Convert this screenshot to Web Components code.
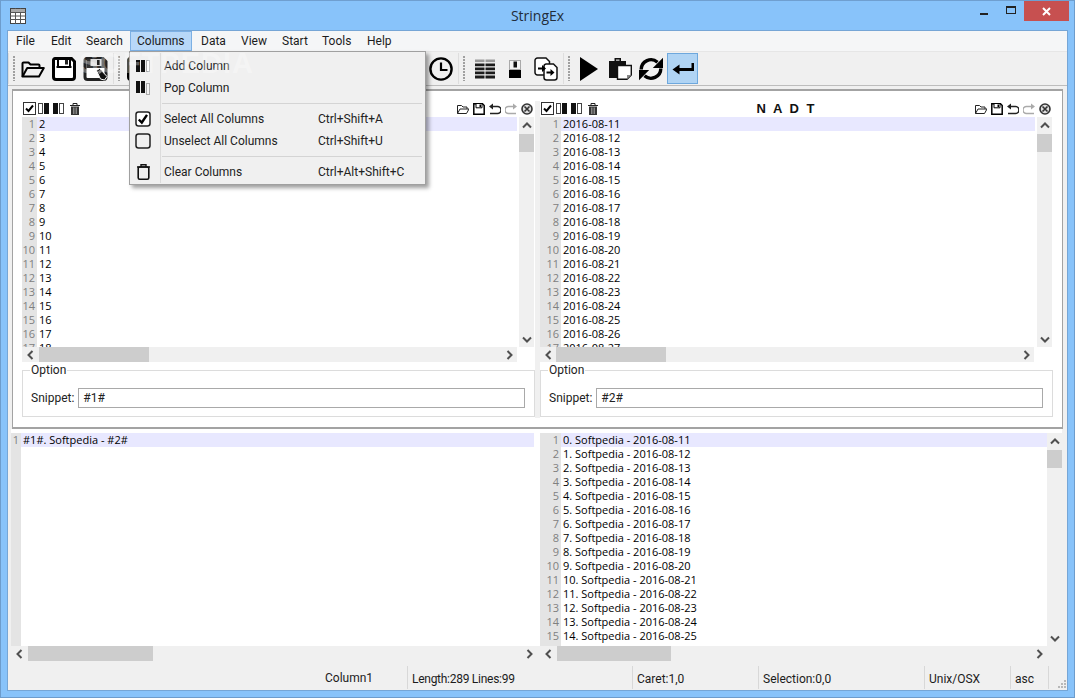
<!DOCTYPE html>
<html>
<head>
<meta charset="utf-8">
<title>StringEx</title>
<style>
  html, body { margin: 0; padding: 0; background: #88c3fa; }
  body { font-family: Roboto, "Liberation Sans", sans-serif; font-size: 12px; color: #000; }
</style>
</head>
<body>
<app-window>
  <menu-bar></menu-bar>
  <tool-bar>
    <tool-grip></tool-grip>
    <x-icon name="open" w="24" h="24" style="margin-left:5px"></x-icon>
    <x-icon name="save" w="24" h="24" style="margin-left:7px"></x-icon>
    <x-icon name="saveas" w="25" h="24" style="margin-left:7px"></x-icon>
    <tool-grip style="margin-left:5px"></tool-grip>
    <x-icon name="save" w="24" h="24" style="margin-left:6px"></x-icon>
    <x-icon name="clock" w="24" h="24" style="margin-left:278px"></x-icon>
    <tool-grip style="margin-left:5px"></tool-grip>
    <x-icon name="table" w="20" h="20" style="margin-left:9px"></x-icon>
    <x-icon name="disk" w="12" h="18" style="margin-left:14px"></x-icon>
    <x-icon name="swap" w="24" h="24" style="margin-left:13px"></x-icon>
    <tool-grip style="margin-left:5px"></tool-grip>
    <x-icon name="play" w="18" h="24" style="margin-left:9px"></x-icon>
    <x-icon name="paste" w="23" h="23" style="margin-left:11px"></x-icon>
    <x-icon name="refresh" w="24" h="24" style="margin-left:7px"></x-icon>
    <tool-toggle style="margin-left:4px"><x-icon name="enter" w="22" h="12"></x-icon></tool-toggle>
  </tool-bar>
  <split-top>
    <div slot="a">
      <code-pane id="p1" gutter="15" view="230" track="495" thumb-at="0" thumb="110" vthumb="18" vgap="2,1" actions></code-pane>
      <option-box value="#1#"></option-box>
    </div>
    <div slot="b">
      <code-pane id="p2" gutter="21" view="230" track="494" thumb-at="-1" thumb="110" vthumb="18" vgap="2,1" heading="N A D T" actions></code-pane>
      <option-box value="#2#"></option-box>
    </div>
  </split-top>
  <split-bottom>
    <code-pane slot="a" id="p3" gutter="10" view="213" track="526" thumb-at="0" thumb="125" novscroll></code-pane>
    <code-pane slot="b" id="p4" gutter="21" view="213" track="507" thumb-at="0" thumb="114" vthumb="18" vgap="0,0"></code-pane>
  </split-bottom>
  <status-bar></status-bar>
</app-window>

<script>
const ICONS = {
  open: `<g fill="none" stroke="#000" stroke-width="2" stroke-linejoin="round"><path d="M1.500 19.500V6.500a1 1 0 0 1 1-1h5l2 2h8a1 1 0 0 1 1 1V11"/><path d="M1.500 19.500H18L22.800 11H6.200Z"/></g>`,
  save: `<path d="M3 1.500H19.500L22.500 4.500V20a2.500 2.500 0 0 1-2.500 2.500H4A2.500 2.500 0 0 1 1.500 20V3A1.500 1.500 0 0 1 3 1.500Z" fill="#fff" stroke="#000" stroke-width="3"/><path d="M4.500 9H19.500V11H4.500Z" fill="#000"/><path d="M6 3V9" stroke="#000" stroke-width="2"/><path d="M18 3V9" stroke="#000" stroke-width="2"/><rect x="13" y="3" width="3" height="4.500" fill="#222"/>`,
  saveas: `<path d="M3 1.500H19.500L22.500 4.500V20a2.500 2.500 0 0 1-2.500 2.500H4A2.500 2.500 0 0 1 1.500 20V3A1.500 1.500 0 0 1 3 1.500Z" fill="#fff" stroke="#222" stroke-width="3"/><path d="M3 2H22V11H3Z" fill="#333"/><rect x="7" y="2" width="11" height="7" fill="#ddd"/><rect x="13.500" y="3" width="2.600" height="5" fill="#222"/><path d="M13 13.500L16 11.500L23.500 19.500L21 23L17 22Z" fill="#111" stroke="#fff" stroke-width="1"/><path d="M14 14.500L17 12.500L19 14.500L16 17Z" fill="#888"/>`,
  clock: `<circle cx="12" cy="12" r="10.600" fill="none" stroke="#000" stroke-width="2.400"/><path d="M12 5.500V13H18.500" fill="none" stroke="#000" stroke-width="2.200"/>`,
  table: `<rect width="9.500" height="2.600" fill="#9a9a9a"/><rect x="10.500" width="9.500" height="2.600" fill="#9a9a9a"/><path d="M0 4h9.500v2.800H0ZM10.500 4H20v2.800h-9.500ZM0 8h9.500v2.800H0ZM10.500 8H20v2.800h-9.500ZM0 12h9.500v2.800H0ZM10.500 12H20v2.800h-9.500ZM0 16h9.500v3H0ZM10.500 16H20v3h-9.500Z" fill="#1b1b1b"/>`,
  disk: `<rect x=".5" y=".5" width="11" height="9" fill="#f4f4f4" stroke="#aaa"/><rect x="4.500" y="1.500" width="3.500" height="6" fill="#111"/><rect y="10" width="12" height="8" fill="#000"/>`,
  swap: `<path d="M3.500 1H12L15.500 4.500V18H3.500a2.500 2.500 0 0 1-2.500-2.500V3.500A2.500 2.500 0 0 1 3.500 1Z" fill="#fff" stroke="#111" stroke-width="1.500"/><path d="M12 7H19.500L23 10.500V20.500a2.500 2.500 0 0 1-2.500 2.500H12.500a2.500 2.500 0 0 1-2.500-2.500V9.500A2.500 2.500 0 0 1 12 7Z" fill="#fff" stroke="#111" stroke-width="1.500"/><path d="M4 10.500H8V8L12 11.500L8 15V12.500H4Z" fill="#000"/><path d="M12.500 14.500H16.500V12L20.500 15.500L16.500 19V16.500H12.500Z" fill="#000"/>`,
  play: `<path d="M0 0L18 12L0 24Z" fill="#000"/>`,
  paste: `<path d="M0 4H5.500V1H12V4H17V21H0Z" fill="#111"/><rect x="7" y="2.500" width="3.500" height="1.300" fill="#ccc"/><path d="M8.500 8.500H22.300V18L18 22.300H8.500Z" fill="#fff" stroke="#111" stroke-width="1.400"/><path d="M22.300 18H18V22.300Z" fill="#888"/>`,
  refresh: `<g fill="none" stroke="#000" stroke-width="3.400"><path d="M2.200 12.500A9.800 9.800 0 0 1 18.500 5.200"/><path d="M21.800 11.500A9.800 9.800 0 0 1 5.500 18.800"/></g><path d="M24 .8V11H13.800Z M0 23.200V13H10.200Z" fill="#000"/>`,
  enter: `<path d="M20.500 0V6.500H5" fill="none" stroke="#000" stroke-width="3"/><path d="M0 6.500L7 1.500V11.500Z" fill="#000"/>`,
  coladd: `<rect x="0" y="0" width="4" height="12" fill="#111"/><rect x="5" y="0" width="4" height="12" fill="#111"/><rect x="10.500" y=".5" width="3" height="11" fill="#fff" stroke="#aaa"/>`,
  colpop: `<rect x="0" y="0" width="4" height="12" fill="#111"/><rect x="5" y="0" width="4" height="12" fill="#111"/><rect x="10.500" y="2.500" width="3" height="11" fill="#f4f4f4" stroke="#aaa"/>`,
  boxon: `<rect x="1" y="1" width="14" height="14" rx="2.500" fill="#fff" stroke="#222" stroke-width="1.500"/><path d="M3.800 8.500L6.800 11.500L12 3.800" fill="none" stroke="#000" stroke-width="2.400"/>`,
  boxoff: `<rect x="1" y="1" width="14" height="14" rx="2.500" fill="none" stroke="#222" stroke-width="1.500"/>`,
  trashbig: `<path d="M0 3H13M4 3V.8H9V3" fill="none" stroke="#111" stroke-width="1.400"/><rect x="1.200" y="3" width="10.600" height="12.200" rx="1.500" fill="none" stroke="#111" stroke-width="1.600"/>`,
  small_check: `<rect x=".5" y=".5" width="12" height="12" fill="#fff" stroke="#333"/><path d="M3 6.500L5.500 9L10 3.500" fill="none" stroke="#000" stroke-width="2"/>`,
  small_cola: `<rect x=".5" y=".5" width="4" height="10" fill="#fff" stroke="#444"/><rect x="6" y="0" width="5" height="11" fill="#111"/>`,
  small_colb: `<rect x="0" y="0" width="5" height="11" fill="#111"/><rect x="6.500" y=".5" width="4" height="10" fill="#fff" stroke="#444"/>`,
  small_trash: `<path d="M0 2.500H10M3 2V.5H7V2" fill="none" stroke="#222"/><path d="M1 3.500H9V12H1Z" fill="#333"/><path d="M3.500 4.500V11M5 4.500V11M6.500 4.500V11" stroke="#aaa" stroke-width=".7"/>`,
  small_open: `<g fill="none" stroke="#222"><path d="M.5 10.500V2.500H4.500L6 4H10V6"/><path d="M.5 10.500H9.500L12 6H3Z"/></g>`,
  small_save: `<path d="M.8.8H9.500L11.200 2.500V11.200H.8Z" fill="#fff" stroke="#000" stroke-width="1.500"/><path d="M3 1V4.800H9V1" fill="#fff" stroke="#000"/><rect x="6.500" y="1.500" width="1.500" height="2.500" fill="#000"/>`,
  small_undo: `<path d="M3 3.500H8.500a3 3 0 0 1 0 7H1" fill="none" stroke="#222" stroke-width="1.500"/><path d="M0 3.500L4 .5V6.500Z" fill="#222"/>`,
  small_redo: `<path d="M9 3.500H3.500a3 3 0 0 0 0 7H11" fill="none" stroke="#aaa" stroke-width="1.500"/><path d="M12 3.500L8 .5V6.500Z" fill="#aaa"/>`,
  small_close: `<circle cx="6" cy="6" r="5" fill="#ddd" stroke="#333" stroke-width="1.600"/><path d="M3.500 3.500L8.500 8.500M8.500 3.500L3.500 8.500" stroke="#333" stroke-width="1.600"/>`,
  appicon: `<rect x=".5" y=".5" width="15" height="15" fill="#fff" stroke="#444"/><path d="M0 4.500H16M0 8H16M0 11.500H16M5.500 0V16M10.500 0V16" stroke="#555"/><rect x="1" y="1" width="14" height="3" fill="#aaa"/>`
};
const VIEW = { small_check:[13,13], small_cola:[11,11], small_colb:[11,11], small_trash:[10,12], small_open:[12,11], small_save:[12,12], small_undo:[12,12], small_redo:[12,12], small_close:[12,12], coladd:[14,12], colpop:[14,14], boxon:[16,16], boxoff:[16,16], trashbig:[13,16], appicon:[16,16], table:[20,19], disk:[12,18], play:[18,24], paste:[23,23], enter:[21,12], saveas:[24,24] };

class XIcon extends HTMLElement {
  connectedCallback() {
    const name = this.getAttribute('name');
    const w = this.getAttribute('w') || 16;
    const h = this.getAttribute('h') || 16;
    const v = VIEW[name] || [24, 24];
    this.attachShadow({ mode: 'open' }).innerHTML = `
      <style>:host { display: block; flex: none; line-height: 0; }</style>
      <svg width="${w}" height="${h}" viewBox="0 0 ${v[0]} ${v[1]}">${ICONS[name]}</svg>`;
  }
}

class AppWindow extends HTMLElement {
  constructor() {
    super();
    this.attachShadow({ mode: 'open' }).innerHTML = `
      <style>
        :host {
          display: flex; flex-direction: column; position: relative; box-sizing: border-box;
          width: 1075px; height: 698px; background: #88c3fa;
          border: 1px solid #6d9ccc; border-top-color: #6f9fd0; padding: 0 6px 6px;
          overflow: hidden;
        }
        .title { height: 29px; display: flex; align-items: flex-start; position: relative; flex: none; }
        .app { margin: 7px 0 0 3px; }
        .name { flex: 1; text-align: center; font: 14px/30px "Open Sans", sans-serif; color: #222d3a; padding-left: 77px; }
        .btns { display: flex; align-items: stretch; height: 20px; margin-right: -1px; }
        .b { width: 26px; display: flex; align-items: center; justify-content: center; }
        .close { width: 45px; background: #c75050; }
        .client {
          flex: 1; min-height: 0; display: flex; flex-direction: column;
          border: 1px solid #76a6d6; background: #f0f0f0;
        }
        .mark {
          position: absolute; left: 78px; top: 46px; font: bold 29px "Liberation Sans", sans-serif;
          letter-spacing: 1px; color: rgba(255,255,255,.32); pointer-events: none; z-index: 30;
        }
      </style>
      <div class="title">
        <x-icon class="app" name="appicon" w="16" h="16"></x-icon>
        <div class="name">StringEx</div>
        <div class="btns">
          <div class="b"><svg width="10" height="10"><rect y="7" width="8" height="2" fill="#222"/></svg></div>
          <div class="b"><svg width="11" height="10"><rect x=".5" y=".5" width="9" height="7" fill="none" stroke="#222"/><rect width="10" height="2" fill="#222"/></svg></div>
          <div class="b close"><svg width="9" height="9"><path d="M1 1L8 8M8 1L1 8" stroke="#fff" stroke-width="2"/></svg></div>
        </div>
      </div>
      <div class="client"><slot></slot></div>
      <div class="mark">SOFTPEDIA</div>`;
  }
}

class MenuRow extends HTMLElement {
  connectedCallback() {
    const icon = this.getAttribute('icon');
    const [w, h] = (this.getAttribute('size') || '16,16').split(',');
    this.attachShadow({ mode: 'open' }).innerHTML = `
      <style>
        :host { display: flex; align-items: center; height: 22px; }
        .ic { width: 30px; display: flex; justify-content: center; box-sizing: border-box; padding-right: 6px; }
        .tx { width: 154px; margin-left: 3px; color: #222; }
        .sc { color: #222; }
      </style>
      <div class="ic"><x-icon name="${icon}" w="${w}" h="${h}"></x-icon></div>
      <div class="tx">${this.getAttribute('label')}</div>
      <div class="sc">${this.getAttribute('keys') || ''}</div>`;
  }
}

class DropMenu extends HTMLElement {
  constructor() {
    super();
    this.attachShadow({ mode: 'open' }).innerHTML = `
      <style>
        :host {
          position: absolute; left: 121px; top: 20px; z-index: 20; box-sizing: border-box;
          width: 297px; height: 134px; padding: 3px 0 0 1px; display: block;
          background: #f0f0f0;
          border: 1px solid #a0a0a0; box-shadow: 3px 3px 4px rgba(0,0,0,.38);
        }
        .rule { position: absolute; left: 30px; top: 1px; bottom: 1px; width: 1px; background: #dcdcdc; }
        hr { border: 0; height: 1px; background: #d4d4d4; margin: 4px 3px 4px 31px; }
      </style>
      <div class="rule"></div>
      <menu-row icon="coladd" size="14,12" label="Add Column"></menu-row>
      <menu-row icon="colpop" size="14,14" label="Pop Column"></menu-row>
      <hr>
      <menu-row icon="boxon" label="Select All Columns" keys="Ctrl+Shift+A"></menu-row>
      <menu-row icon="boxoff" label="Unselect All Columns" keys="Ctrl+Shift+U"></menu-row>
      <hr>
      <menu-row icon="trashbig" size="13,16" label="Clear Columns" keys="Ctrl+Alt+Shift+C"></menu-row>`;
  }
}

class MenuBar extends HTMLElement {
  constructor() {
    super();
    const names = [['File', 35], ['Edit', 35], ['Search', 51], ['Columns', 64, 1], ['Data', 40], ['View', 41], ['Start', 40], ['Tools', 45], ['Help', 45]];
    this.attachShadow({ mode: 'open' }).innerHTML = `
      <style>
        :host {
          display: flex; position: relative; height: 20px; flex: none;
          background: #f5f6f7; border-bottom: 1px solid #e6e6e6; color: #1c1c1c;
        }
        .m { flex: none; padding-left: 8px; line-height: 21px; height: 20px; box-sizing: border-box; white-space: nowrap; }
        .on { background: #b8d8f8; border: 1px solid #7cb0e4; padding-left: 6px; line-height: 19px; background-clip: padding-box; margin: 0 1px; }
      </style>
      ${names.map(n => `<div class="m ${n[2] ? 'on' : ''}" style="width:${n[2] ? n[1] - 2 : n[1]}px">${n[0]}</div>`).join('')}
      <drop-menu></drop-menu>`;
  }
}

class ToolGrip extends HTMLElement {
  constructor() {
    super();
    this.attachShadow({ mode: 'open' }).innerHTML = `
      <style>
        :host {
          display: flex; flex: none; width: 8px; height: 31px; box-sizing: border-box; align-items: center;
          border-left: 1px solid #dedede; padding-left: 4px;
        }
        div {
          width: 3px; height: 25px;
          background: radial-gradient(circle at 1px 1px, #a0a0a0 1px, transparent 1px) 0 0 / 3px 3px;
        }
      </style>
      <div></div>`;
  }
}

class ToolToggle extends HTMLElement {
  constructor() {
    super();
    this.attachShadow({ mode: 'open' }).innerHTML = `
      <style>
        :host {
          display: flex; align-items: center; justify-content: center; flex: none; box-sizing: border-box;
          width: 31px; height: 31px; background: #b0d4f4; border: 1px solid #6ea8dd;
        }
      </style>
      <slot></slot>`;
  }
}

class ToolBar extends HTMLElement {
  constructor() {
    super();
    this.attachShadow({ mode: 'open' }).innerHTML = `
      <style>
        :host {
          display: flex; align-items: center; height: 33px; flex: none;
          background: #f0f0f0; border-bottom: 1px solid #bdbdbd;
        }
      </style>
      <slot></slot>`;
  }
}

class ScrollBar extends HTMLElement {
  connectedCallback() {
    const vert = this.hasAttribute('vertical');
    const at = this.getAttribute('at') || 0;
    const len = this.getAttribute('len') || 100;
    const back = vert ? 'M1 6.500L5 2.500L9 6.500' : 'M6.500 1L2.500 5L6.500 9';
    const fwd = vert ? 'M1 3.500L5 7.500L9 3.500' : 'M3.500 1L7.500 5L3.500 9';
    const thumbSize = vert ? `height:${len}px;margin-top:${at}px` : `width:${len}px;margin-left:${at}px`;
    this.attachShadow({ mode: 'open' }).innerHTML = `
      <style>
        :host { display: flex; flex: none; background: #f0f0f0; flex-direction: ${vert ? 'column' : 'row'}; ${vert ? 'width:15px' : 'height:15px'}; }
        .a { flex: none; display: flex; align-items: center; justify-content: center; ${vert ? 'height:17px' : 'width:17px'}; }
        .t { flex: none; background: #cdcdcd; }
        .s { flex: 1; }
      </style>
      <div class="a"><svg width="10" height="10"><path d="${back}" fill="none" stroke="#505050" stroke-width="2"/></svg></div>
      <div class="t" style="${thumbSize}"></div>
      <div class="s"></div>
      <div class="a"><svg width="10" height="10"><path d="${fwd}" fill="none" stroke="#505050" stroke-width="2"/></svg></div>`;
  }
}

class CodePane extends HTMLElement {
  connectedCallback() {
    const lines = (this.getAttribute('lines') || '').split('|');
    const gutter = +this.getAttribute('gutter');
    const view = +this.getAttribute('view');
    const track = +this.getAttribute('track');
    const thumb = +this.getAttribute('thumb');
    const thumbAt = this.getAttribute('thumb-at') || 0;
    const heading = this.getAttribute('heading') || '';
    const actions = this.hasAttribute('actions');
    const noV = this.hasAttribute('novscroll');
    const [gapL, gapR] = (this.getAttribute('vgap') || '0,0').split(',');
    const numRows = lines.map((_, i) => `<div>${i + 1}</div>`).join('');
    const textRows = lines.map((t, i) => `<div class="${i === 0 ? 'cur' : ''}">${t}</div>`).join('');
    this.attachShadow({ mode: 'open' }).innerHTML = `
      <style>
        :host { display: block; }
        .head { display: flex; align-items: center; height: 16px; box-sizing: border-box; padding-bottom: 1px; background: #fff; }
        .group { display: flex; align-items: center; }
        .ttl { flex: 1; text-align: center; font: bold 13px "Liberation Sans", sans-serif; letter-spacing: 2px; white-space: pre; color: #111; }
        .body { display: flex; height: ${view}px; background: #fff; }
        .view { flex: 1; display: flex; overflow: hidden; font: 11px/14px "Open Sans", "Liberation Sans", sans-serif; color: #000; }
        .gut { flex: none; width: ${gutter}px; background: #e4e4e4; color: #808080; text-align: right; box-sizing: border-box; padding-right: 2px; }
        .txt { flex: 1; min-width: 0; }
        .txt div { padding-left: 2px; height: 14px; white-space: nowrap; }
        .cur { background: #e8e8ff; }
        scroll-bar[vertical] { margin: 0 ${gapR}px 0 ${gapL}px; }
      </style>
      ${actions ? `<div class="head">
        <div class="group" style="padding-left:1px">
          <x-icon name="small_check" w="13" h="13"></x-icon>
          <x-icon name="small_cola" w="11" h="11" style="margin-left:2px"></x-icon>
          <x-icon name="small_colb" w="11" h="11" style="margin-left:4px"></x-icon>
          <x-icon name="small_trash" w="10" h="12" style="margin-left:6px"></x-icon>
        </div>
        <div class="ttl">${heading}</div>
        <div class="group" style="padding-right:2px">
          <x-icon name="small_open" w="12" h="11"></x-icon>
          <x-icon name="small_save" w="12" h="12" style="margin-left:4px"></x-icon>
          <x-icon name="small_undo" w="12" h="12" style="margin-left:4px"></x-icon>
          <x-icon name="small_redo" w="12" h="12" style="margin-left:4px"></x-icon>
          <x-icon name="small_close" w="12" h="12" style="margin-left:4px"></x-icon>
        </div>
      </div>` : ''}
      <div class="body">
        <div class="view">
          <div class="gut">${numRows}</div>
          <div class="txt">${textRows}</div>
        </div>
        ${noV ? '' : `<scroll-bar vertical at="0" len="${this.getAttribute('vthumb')}"></scroll-bar>`}
      </div>
      <scroll-bar at="${thumbAt}" len="${thumb}" style="width:${track}px"></scroll-bar>`;
  }
}

class OptionBox extends HTMLElement {
  connectedCallback() {
    this.attachShadow({ mode: 'open' }).innerHTML = `
      <style>
        :host { display: block; height: 55px; box-sizing: border-box; background: #fff; color: #222; }
        fieldset {
          margin: 0; height: 55px; box-sizing: border-box; border: 1px solid #dcdcdc; padding: 0 9px 0 8px;
          display: flex; align-items: center;
        }
        legend { padding: 0 1px; margin-left: -1px; line-height: 16px; }
        .row { display: flex; align-items: center; gap: 4px; width: 100%; margin-top: 1px; }
        .in { flex: 1; height: 20px; box-sizing: border-box; border: 1px solid #a9a9a9; padding-left: 4px; line-height: 19px; background: #fff; }
      </style>
      <fieldset>
        <legend>Option</legend>
        <div class="row"><div>Snippet:</div><div class="in">${this.getAttribute('value')}</div></div>
      </fieldset>`;
  }
}

class SplitTop extends HTMLElement {
  constructor() {
    super();
    this.attachShadow({ mode: 'open' }).innerHTML = `
      <style>
        :host {
          display: grid; grid-template-columns: 513px 5px 513px; flex: none; box-sizing: border-box;
          margin: 3px 4px 0; padding: 10px 9px 0; height: 340px; background: #fff;
          border: 1px solid #a3a3a3; border-top-width: 2px; border-bottom: 2px solid #a3a3a3;
        }
        .gap { background: #f0f0f0; height: 317px; }
      </style>
      <slot name="a"></slot><div class="gap"></div><slot name="b"></slot>`;
  }
}

class SplitBottom extends HTMLElement {
  constructor() {
    super();
    this.attachShadow({ mode: 'open' }).innerHTML = `
      <style>
        :host {
          display: grid; grid-template-columns: 523px 6px 522px; flex: none; align-items: start;
          margin: 0 5px 0 3px; padding-top: 4px;
          background: linear-gradient(#fff 217px, #f0f0f0 217px);
        }
      </style>
      <slot name="a"></slot><div></div><slot name="b"></slot>`;
  }
}

class StatusBar extends HTMLElement {
  constructor() {
    super();
    const cells = [[225, 'Length:289 Lines:99', 'letter-spacing:-.27px'], [126, 'Caret:1,0'], [166, 'Selection:0,0'], [86, 'Unix/OSX'], [38, 'asc']];
    this.attachShadow({ mode: 'open' }).innerHTML = `
      <style>
        :host { display: flex; align-items: center; height: 25px; margin-top: 4px; flex: none; color: #1c1c1c; line-height: 28px; }
        .first { width: 399px; box-sizing: border-box; padding-left: 317px; }
        .c { box-sizing: border-box; height: 23px; line-height: 27px; border-left: 1px solid #d8d8d8; padding-left: 4px; white-space: nowrap; }
        .grip { flex: 1; align-self: stretch; border-left: 1px solid #d8d8d8; margin: 1px 0 1px; display: flex; align-items: flex-end; justify-content: flex-end; }
      </style>
      <div class="first">Column1</div>
      ${cells.map(c => `<div class="c" style="width:${c[0]}px;${c[2] || ''}">${c[1]}</div>`).join('')}
      <div class="grip"><svg width="10" height="10"><path d="M7 1h2v2H7ZM4 4h2v2H4ZM7 4h2v2H7ZM1 7h2v2H1ZM4 7h2v2H4ZM7 7h2v2H7Z" fill="#b8b8b8"/></svg></div>`;
  }
}

// pane contents
const pad = n => String(n).padStart(2, '0');
const day = i => `2016-08-${pad(11 + i)}`;
const seq = (n, f) => Array.from({ length: n }, (_, i) => f(i)).join('|');
document.getElementById('p1').setAttribute('lines', seq(17, i => i + 2));
document.getElementById('p2').setAttribute('lines', seq(17, day));
document.getElementById('p3').setAttribute('lines', '#1#. Softpedia - #2#');
document.getElementById('p4').setAttribute('lines', seq(15, i => `${i}. Softpedia - ${day(i)}`));

customElements.define('x-icon', XIcon);
customElements.define('menu-row', MenuRow);
customElements.define('drop-menu', DropMenu);
customElements.define('menu-bar', MenuBar);
customElements.define('tool-grip', ToolGrip);
customElements.define('tool-toggle', ToolToggle);
customElements.define('tool-bar', ToolBar);
customElements.define('scroll-bar', ScrollBar);
customElements.define('code-pane', CodePane);
customElements.define('option-box', OptionBox);
customElements.define('split-top', SplitTop);
customElements.define('split-bottom', SplitBottom);
customElements.define('status-bar', StatusBar);
customElements.define('app-window', AppWindow);
</script>
</body>
</html>
